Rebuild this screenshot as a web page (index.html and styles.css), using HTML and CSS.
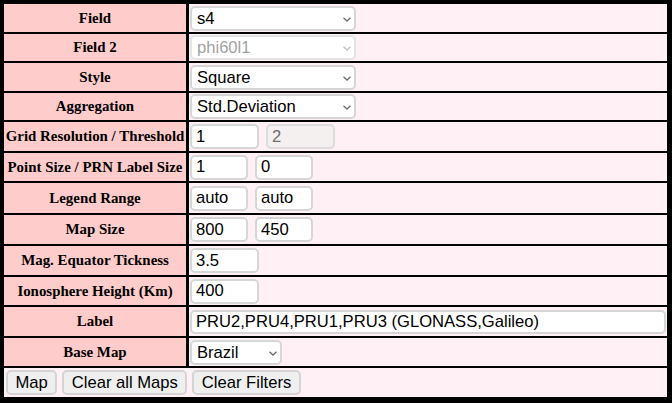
FILE: index.html
```html
<!DOCTYPE html>
<html>
<head>
<meta charset="utf-8">
<link rel="stylesheet" href="styles.css">
</head>
<body>
<div class="form">
  <div class="lbl">Field</div>
  <div class="val">
    <span class="sel w166"><select class="ctl"><option>s4</option></select><svg class="chev" width="8" height="5" viewBox="0 0 8 5"><path d="M0.5 0.8 L4 4 L7.5 0.8" fill="none" stroke="#6b6b6b" stroke-width="1.3"/></svg></span>
  </div>

  <div class="lbl">Field 2</div>
  <div class="val">
    <span class="sel w166"><select class="ctl off" disabled><option>phi60l1</option></select><svg class="chev" width="8" height="5" viewBox="0 0 8 5"><path d="M0.5 0.8 L4 4 L7.5 0.8" fill="none" stroke="#c4c4c4" stroke-width="1.3"/></svg></span>
  </div>

  <div class="lbl">Style</div>
  <div class="val">
    <span class="sel w166"><select class="ctl"><option>Square</option></select><svg class="chev" width="8" height="5" viewBox="0 0 8 5"><path d="M0.5 0.8 L4 4 L7.5 0.8" fill="none" stroke="#6b6b6b" stroke-width="1.3"/></svg></span>
  </div>

  <div class="lbl">Aggregation</div>
  <div class="val">
    <span class="sel w166"><select class="ctl"><option>Std.Deviation</option></select><svg class="chev" width="8" height="5" viewBox="0 0 8 5"><path d="M0.5 0.8 L4 4 L7.5 0.8" fill="none" stroke="#6b6b6b" stroke-width="1.3"/></svg></span>
  </div>

  <div class="lbl">Grid Resolution / Threshold</div>
  <div class="val">
    <input class="ctl in-l" type="text" value="1">
    <input class="ctl in-l dis" type="text" value="2" disabled>
  </div>

  <div class="lbl">Point Size / PRN Label Size</div>
  <div class="val">
    <input class="ctl in-s" type="text" value="1">
    <input class="ctl in-s" type="text" value="0">
  </div>

  <div class="lbl">Legend Range</div>
  <div class="val">
    <input class="ctl in-s" type="text" value="auto">
    <input class="ctl in-s" type="text" value="auto">
  </div>

  <div class="lbl">Map Size</div>
  <div class="val">
    <input class="ctl in-s" type="text" value="800">
    <input class="ctl in-s" type="text" value="450">
  </div>

  <div class="lbl">Mag. Equator Tickness</div>
  <div class="val">
    <input class="ctl in-l" type="text" value="3.5">
  </div>

  <div class="lbl">Ionosphere Height (Km)</div>
  <div class="val">
    <input class="ctl in-l" type="text" value="400">
  </div>

  <div class="lbl">Label</div>
  <div class="val">
    <input class="ctl in-wide" type="text" value="PRU2,PRU4,PRU1,PRU3 (GLONASS,Galileo)">
  </div>

  <div class="lbl">Base Map</div>
  <div class="val">
    <span class="sel w92"><select class="ctl"><option>Brazil</option></select><svg class="chev" width="8" height="5" viewBox="0 0 8 5"><path d="M0.5 0.8 L4 4 L7.5 0.8" fill="none" stroke="#6b6b6b" stroke-width="1.3"/></svg></span>
  </div>

  <div class="btns">
    <button class="btn" type="button">Map</button>
    <button class="btn" type="button">Clear all Maps</button>
    <button class="btn" type="button">Clear Filters</button>
  </div>
</div>
</body>
</html>
```
FILE: styles.css
```css
html, body {
  margin: 0;
  padding: 0;
  background: #000;
}

.form {
  box-sizing: border-box;
  width: 672px;
  height: 403px;
  background: #000;
  padding: 4px 5px 6px 4px;
  display: grid;
  grid-template-columns: 182px 1fr;
  grid-template-rows: 28px 27px 28px 27px 29px 28px 30px 29px 29px 28px 29px 28px 29px;
  column-gap: 3px;
  row-gap: 2px;
}

.lbl {
  background: #ffcccc;
  display: flex;
  align-items: center;
  justify-content: center;
  text-align: center;
  white-space: nowrap;
  font-family: "Liberation Serif", "Times New Roman", serif;
  font-weight: bold;
  font-size: 14.9px;
  color: #000;
}

.val {
  background: #fff0f5;
  display: flex;
  align-items: center;
  gap: 7px;
  padding-left: 1px;
}

.ctl {
  box-sizing: border-box;
  height: 25px;
  margin: 0;
  font-family: "Liberation Sans", Arial, sans-serif;
  font-size: 16.6px;
  color: #000;
  background: #fff;
  border: 2px solid #d6d6d6;
  border-radius: 5px;
  padding: 0 4px;
  outline: none;
}

select.ctl {
  -webkit-appearance: none;
  appearance: none;
  width: 100%;
  padding-left: 5px;
}

select.off {
  color: #a3a3a3;
  border-color: #e4e4e4;
  opacity: 1;
}

.sel {
  position: relative;
  display: inline-flex;
}

.w166 { width: 166px; }
.w92 { width: 92px; }

.chev {
  position: absolute;
  right: 5px;
  top: 11px;
  pointer-events: none;
}

.in-l { width: 69px; }
.in-s { width: 58px; }
.in-wide { width: 476px; height: 24px; }

.dis {
  background: #f4f0f0;
  color: #6d6d6d;
  border-color: #dcdcdc;
}

.btns {
  grid-column: 1 / span 2;
  background: #fff0f5;
  display: flex;
  align-items: center;
  gap: 5px;
  padding-left: 2px;
}

.btn {
  box-sizing: border-box;
  height: 25px;
  margin: 0;
  padding: 0 7.5px;
  font-family: "Liberation Sans", Arial, sans-serif;
  font-size: 16.6px;
  color: #000;
  background: #efefef;
  border: 2px solid #d4d4d4;
  border-radius: 5px;
}
```
